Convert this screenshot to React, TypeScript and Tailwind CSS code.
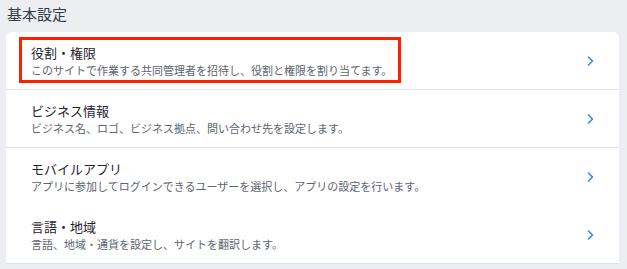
import React from "react";

const rows = [
  {
    title: "役割・権限",
    desc: "このサイトで作業する共同管理者を招待し、役割と権限を割り当てます。",
    highlight: true,
    divider: true,
  },
  {
    title: "ビジネス情報",
    desc: "ビジネス名、ロゴ、ビジネス拠点、問い合わせ先を設定します。",
    divider: true,
  },
  {
    title: "モバイルアプリ",
    desc: "アプリに参加してログインできるユーザーを選択し、アプリの設定を行います。",
    divider: false,
  },
  {
    title: "言語・地域",
    desc: "言語、地域・通貨を設定し、サイトを翻訳します。",
    divider: true,
  },
];

const Chevron = () => (
  <svg width="8" height="10" viewBox="0 0 8 10" fill="none">
    <path d="M1.5 1l4 4-4 4" stroke="#3b82f6" strokeWidth="1.6" strokeLinecap="round" strokeLinejoin="round" />
  </svg>
);

export default function App() {
  return (
    <div className="w-[627px] h-[269px] overflow-hidden bg-[#eceef2] font-['Noto_Sans_CJK_JP','Noto_Sans',sans-serif] text-[#20303c]">
      <h2 className="pl-[7px] pt-[4px] h-[32px] text-[15px] leading-[20px] text-[#333a45]">基本設定</h2>
      <div className="ml-[6px] w-[613px] bg-white rounded-t-[6px]">
        {rows.map((r) => (
          <div
            key={r.title}
            className={`flex items-center h-[58px] pl-[25px] pr-[24px] ${r.divider ? "border-b border-[#dfe3ea]" : ""}`}
          >
            <div className="relative flex-1">
              {r.highlight && (
                <span className="absolute left-[-12px] top-[-7px] w-[382px] h-[46px] border-[3px] border-[#ff1f00]" />
              )}
              <div className="text-[13px] leading-[18px] text-[#1f2430]">{r.title}</div>
              <div className="text-[11px] leading-[15px] text-[#5c6470] mt-[1px]">{r.desc}</div>
            </div>
            <Chevron />
          </div>
        ))}
      </div>
    </div>
  );
}
